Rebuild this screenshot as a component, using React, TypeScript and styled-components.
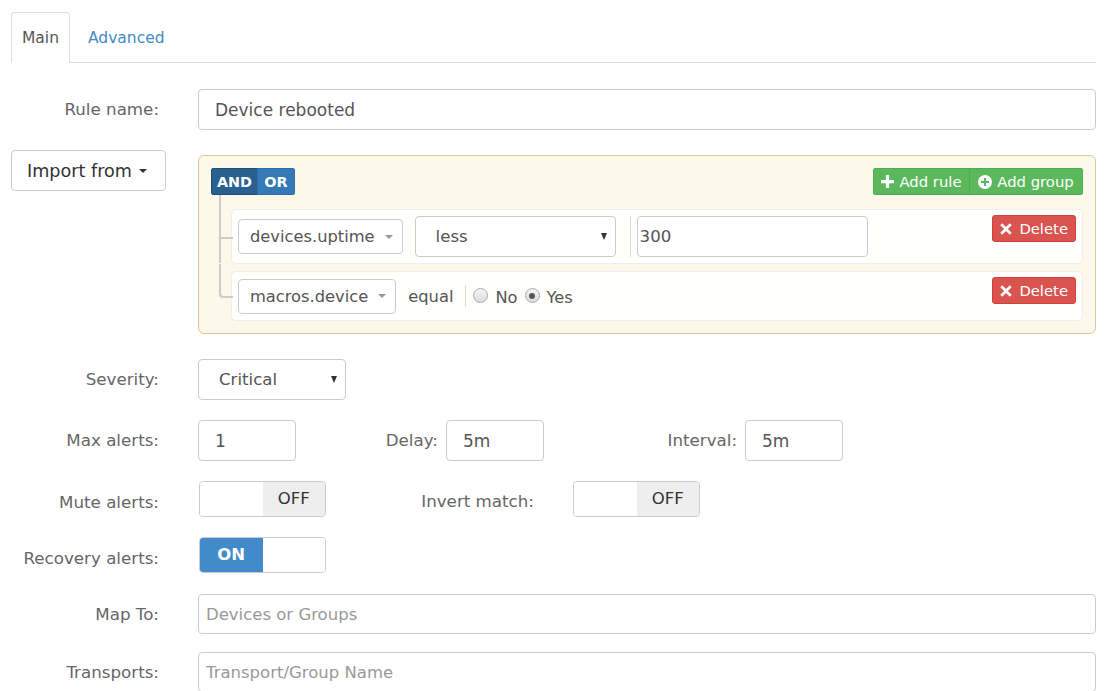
import React from "react";
import styled, { createGlobalStyle } from "styled-components";

const Global = createGlobalStyle`
  html, body { margin: 0; padding: 0; background: #fff; }
  * { box-sizing: border-box; }
  body { font-family: "DejaVu Sans", Verdana, sans-serif; color: #555; }
`;

const Page = styled.div`
  width: 1111px;
  padding: 12px 15px 0 11px;
`;

const TabBar = styled.div`
  display: flex;
  border-bottom: 1px solid #ddd;
  height: 51px;
`;

const Tab = styled.div<{ $active?: boolean }>`
  height: 51px;
  margin-bottom: -1px;
  padding: 0 ${(p) => (p.$active ? 10 : 17)}px;
  border: 1px solid ${(p) => (p.$active ? "#ddd" : "transparent")};
  border-bottom-color: ${(p) => (p.$active ? "#fff" : "transparent")};
  border-radius: 4px 4px 0 0;
  background: ${(p) => (p.$active ? "#fff" : "transparent")};
  display: flex;
  align-items: center;
  font-size: 15.5px;
  color: ${(p) => (p.$active ? "#555" : "#428bca")};
`;

const Form = styled.div`
  margin-top: 26px;
  display: flex;
  flex-direction: column;
`;

const Row = styled.div<{ $mb?: number }>`
  display: grid;
  grid-template-columns: 187px 1fr;
  align-items: start;
  margin-bottom: ${(p) => p.$mb ?? 0}px;
`;

const Label = styled.div<{ $pt?: number }>`
  text-align: right;
  padding-right: 39px;
  padding-top: ${(p) => p.$pt ?? 8}px;
  line-height: 24px;
  font-size: 16.7px;
  color: #666;
  white-space: nowrap;
`;

const TextInput = styled.input<{ $h?: number; $pad?: number; $w?: number; $fs?: number }>`
  display: block;
  width: ${(p) => (p.$w ? `${p.$w}px` : "100%")};
  height: ${(p) => p.$h ?? 41}px;
  border: 1px solid #ccc;
  border-radius: 4px;
  padding: 0 ${(p) => p.$pad ?? 16}px;
  font-family: inherit;
  font-size: ${(p) => p.$fs ?? 17}px;
  color: #555;
  background: #fff;
  outline: none;
  &::placeholder { color: #999; }
`;

const ImportButton = styled.div`
  width: 155px;
  height: 41px;
  border: 1px solid #ccc;
  border-radius: 4px;
  background: #fff;
  display: flex;
  align-items: center;
  padding-left: 15px;
  font-size: 17.6px;
  color: #333;
  gap: 7px;
  white-space: nowrap;
`;

const Caret = styled.span<{ $color?: string; $w?: number; $h?: number }>`
  display: inline-block;
  flex: none;
  width: 0;
  height: 0;
  border-left: ${(p) => (p.$w ?? 8) / 2}px solid transparent;
  border-right: ${(p) => (p.$w ?? 8) / 2}px solid transparent;
  border-top: ${(p) => p.$h ?? 4}px solid ${(p) => p.$color ?? "#333"};
`;

/* ---------- query builder ---------- */

const Group = styled.div`
  margin-top: 5px;
  background: #fdf8ea;
  border: 1px solid #dcc896;
  border-radius: 6px;
  padding: 12px;
`;

const GroupHeader = styled.div`
  display: flex;
  justify-content: space-between;
  align-items: center;
  height: 27px;
`;

const BtnGroup = styled.div`
  display: flex;
  border-radius: 3px;
  overflow: hidden;
  height: 27px;
`;

const SmallBtn = styled.div<{ $bg: string; $border: string; $bold?: boolean; $w?: number }>`
  height: 27px;
  ${(p) => (p.$w ? `width: ${p.$w}px;` : "")}
  padding: 0 6px;
  display: flex;
  align-items: center;
  justify-content: center;
  gap: 5px;
  background: ${(p) => p.$bg};
  border: 1px solid ${(p) => p.$border};
  & + & { margin-left: -1px; }
  color: #fff;
  font-size: ${(p) => (p.$bold ? 14.4 : 14.8)}px;
  font-weight: ${(p) => (p.$bold ? 700 : 400)};
  white-space: nowrap;
`;

const RulesList = styled.div`
  padding-left: 20px;
  padding-top: 14px;
  display: flex;
  flex-direction: column;
  gap: 7px;
`;

const Rule = styled.div<{ $first?: boolean; $last?: boolean; $h: number }>`
  position: relative;
  height: ${(p) => p.$h}px;
  background: rgba(255, 255, 255, 0.9);
  border: 1px solid #eee;
  border-radius: 5px;
  padding: 6px;
  display: flex;
  align-items: center;

  &::before {
    content: "";
    position: absolute;
    left: -13px;
    width: 12px;
    top: ${(p) => (p.$first ? -15 : -8)}px;
    height: calc(50% + ${(p) => (p.$first ? 15 : 8)}px);
    border-left: 2px solid #ccc;
    border-bottom: 2px solid #ccc;
    border-bottom-left-radius: ${(p) => (p.$last ? 4 : 0)}px;
  }
  &::after {
    content: "";
    display: ${(p) => (p.$last ? "none" : "block")};
    position: absolute;
    left: -13px;
    top: 50%;
    height: 50%;
    border-left: 2px solid #ccc;
  }
`;

const FieldSelect = styled.div`
  height: 35px;
  border: 1px solid #ccc;
  border-radius: 4px;
  background: #fff;
  display: flex;
  align-items: center;
  padding: 0 9px 0 11px;
  gap: 10px;
  font-size: 16.3px;
  color: #555;
  white-space: nowrap;
`;

const NativeSelect = styled.div<{ $w: number; $ml?: number }>`
  width: ${(p) => p.$w}px;
  margin-left: ${(p) => p.$ml ?? 0}px;
  height: 41px;
  border: 1px solid #ccc;
  border-radius: 4px;
  background: #fff;
  display: flex;
  align-items: center;
  justify-content: space-between;
  padding: 0 8px 0 20px;
  font-size: 16.6px;
  color: #555;
`;

const VDivider = styled.div<{ $h: number; $ml: number; $mr: number }>`
  width: 1px;
  height: ${(p) => p.$h}px;
  background: #ddd;
  margin: 0 ${(p) => p.$mr}px 0 ${(p) => p.$ml}px;
`;

const ValueInput = styled.div`
  width: 231px;
  height: 41px;
  border: 1px solid #ccc;
  border-radius: 4px;
  background: #fff;
  display: flex;
  align-items: center;
  padding-left: 2px;
  font-size: 16.6px;
  color: #555;
`;

const OpText = styled.span`
  margin-left: 12px;
  font-size: 16.3px;
  color: #555;
`;

const RadioGroup = styled.div`
  display: flex;
  align-items: center;
  font-size: 16.3px;
  color: #555;
  padding-top: 3px;
`;

const Radio = styled.span<{ $checked?: boolean }>`
  width: 15px;
  height: 15px;
  border-radius: 50%;
  border: 1px solid #aaa;
  background: linear-gradient(#f4f4f4, #dcdcdc);
  display: inline-flex;
  align-items: center;
  justify-content: center;
  margin-right: 7px;
  margin-top: -4px;
  &::after {
    content: "";
    display: ${(p) => (p.$checked ? "block" : "none")};
    width: 6px;
    height: 6px;
    border-radius: 50%;
    background: #555;
  }
`;

const RadioText = styled.span`
  margin-right: 7px;
`;

const DeleteBtn = styled.div`
  margin-left: auto;
  align-self: flex-start;
  height: 27px;
  margin-top: -1px;
  padding: 0 7px;
  background: #d9534f;
  border: 1px solid #d43f3a;
  border-radius: 3px;
  color: #fff;
  font-size: 14.8px;
  display: flex;
  align-items: center;
  gap: 7px;
`;

/* ---------- other controls ---------- */

const InlineGrid = styled.div`
  display: grid;
  grid-template-columns: 98px 150px 98px 201px 98px;
  align-items: start;
`;

const InlineLabel = styled.div<{ $pr?: number }>`
  text-align: right;
  padding-right: ${(p) => p.$pr ?? 8}px;
  padding-top: 8px;
  line-height: 24px;
  font-size: 16.7px;
  color: #666;
  white-space: nowrap;
`;

const ToggleRow = styled.div`
  display: grid;
  grid-template-columns: 127px 247px 127px;
  align-items: start;
  padding-left: 1px;
`;

const Switch = styled.div`
  width: 127px;
  height: 36px;
  border: 1px solid #ccc;
  border-radius: 4px;
  overflow: hidden;
  display: flex;
  background: #fff;
`;

const SwitchHalf = styled.div<{ $kind: "on" | "off" | "blank" }>`
  flex: 1;
  display: flex;
  align-items: center;
  justify-content: center;
  font-size: 16.5px;
  padding-bottom: 2px;
  background: ${(p) => (p.$kind === "on" ? "#428bca" : p.$kind === "off" ? "#eee" : "#fff")};
  color: ${(p) => (p.$kind === "on" ? "#fff" : "#333")};
  font-weight: ${(p) => (p.$kind === "on" ? 700 : 400)};
`;

const SoloSwitch = styled.div`
  padding-left: 1px;
`;

const PlusIcon = () => (
  <svg width="13" height="13" viewBox="0 0 12 12">
    <path d="M4.5 0h3v4.5H12v3H7.5V12h-3V7.5H0v-3h4.5z" fill="#fff" />
  </svg>
);

const PlusCircleIcon = () => (
  <svg width="14" height="14" viewBox="0 0 14 14">
    <circle cx="7" cy="7" r="7" fill="#fff" />
    <path d="M6 3h2v3h3v2H8v3H6V8H3V6h3z" fill="#5cb85c" />
  </svg>
);

const RemoveIcon = () => (
  <svg width="12" height="12" viewBox="0 0 12 12">
    <path
      d="M2.2 0.3L6 4.1 9.8 0.3 11.7 2.2 7.9 6 11.7 9.8 9.8 11.7 6 7.9 2.2 11.7 0.3 9.8 4.1 6 0.3 2.2z"
      fill="#fff"
    />
  </svg>
);

const Toggle = ({ on }: { on: boolean }) => (
  <Switch>
    {on ? (
      <>
        <SwitchHalf $kind="on">ON</SwitchHalf>
        <SwitchHalf $kind="blank" />
      </>
    ) : (
      <>
        <SwitchHalf $kind="blank" />
        <SwitchHalf $kind="off">OFF</SwitchHalf>
      </>
    )}
  </Switch>
);

export default function App() {
  return (
    <Page>
      <Global />
      <TabBar>
        <Tab $active>Main</Tab>
        <Tab>Advanced</Tab>
      </TabBar>
      <Form>
        <Row $mb={20}>
          <Label>Rule name:</Label>
          <TextInput readOnly value="Device rebooted" />
        </Row>

        <Row $mb={25}>
          <ImportButton>
            Import from <Caret $color="#333" />
          </ImportButton>
          <Group>
            <GroupHeader>
              <BtnGroup>
                <SmallBtn $bg="#286090" $border="#204d74" $bold $w={47}>
                  AND
                </SmallBtn>
                <SmallBtn $bg="#337ab7" $border="#2e6da4" $bold $w={38}>
                  OR
                </SmallBtn>
              </BtnGroup>
              <BtnGroup>
                <SmallBtn $bg="#5cb85c" $border="#4cae4c" $w={97}>
                  <PlusIcon /> Add rule
                </SmallBtn>
                <SmallBtn $bg="#5cb85c" $border="#4cae4c" $w={114}>
                  <PlusCircleIcon /> Add group
                </SmallBtn>
              </BtnGroup>
            </GroupHeader>
            <RulesList>
              <Rule $first $h={55}>
                <FieldSelect>
                  devices.uptime <Caret $color="#999" />
                </FieldSelect>
                <NativeSelect $w={201} $ml={12}>
                  less <Caret $color="#333" $w={7} $h={7} />
                </NativeSelect>
                <VDivider $h={41} $ml={14} $mr={6} />
                <ValueInput>300</ValueInput>
                <DeleteBtn>
                  <RemoveIcon /> Delete
                </DeleteBtn>
              </Rule>
              <Rule $last $h={50}>
                <FieldSelect>
                  macros.device <Caret $color="#999" />
                </FieldSelect>
                <OpText>equal</OpText>
                <VDivider $h={22} $ml={12} $mr={7} />
                <RadioGroup>
                  <Radio />
                  <RadioText>No</RadioText>
                  <Radio $checked />
                  <RadioText>Yes</RadioText>
                </RadioGroup>
                <DeleteBtn>
                  <RemoveIcon /> Delete
                </DeleteBtn>
              </Rule>
            </RulesList>
          </Group>
        </Row>

        <Row $mb={20}>
          <Label>Severity:</Label>
          <NativeSelect $w={148}>
            Critical <Caret $color="#333" $w={7} $h={7} />
          </NativeSelect>
        </Row>

        <Row $mb={20}>
          <Label>Max alerts:</Label>
          <InlineGrid>
            <TextInput readOnly value="1" $w={98} />
            <InlineLabel>Delay:</InlineLabel>
            <TextInput readOnly value="5m" $w={98} />
            <InlineLabel>Interval:</InlineLabel>
            <TextInput readOnly value="5m" $w={98} />
          </InlineGrid>
        </Row>

        <Row $mb={20}>
          <Label $pt={9}>Mute alerts:</Label>
          <ToggleRow>
            <Toggle on={false} />
            <InlineLabel $pr={39}>Invert match:</InlineLabel>
            <Toggle on={false} />
          </ToggleRow>
        </Row>

        <Row $mb={21}>
          <Label $pt={9}>Recovery alerts:</Label>
          <SoloSwitch>
            <Toggle on />
          </SoloSwitch>
        </Row>

        <Row $mb={18}>
          <Label>Map To:</Label>
          <TextInput readOnly placeholder="Devices or Groups" $h={40} $pad={7} $fs={16.5} />
        </Row>

        <Row>
          <Label>Transports:</Label>
          <TextInput readOnly placeholder="Transport/Group Name" $h={40} $pad={7} $fs={16.5} />
        </Row>
      </Form>
    </Page>
  );
}
